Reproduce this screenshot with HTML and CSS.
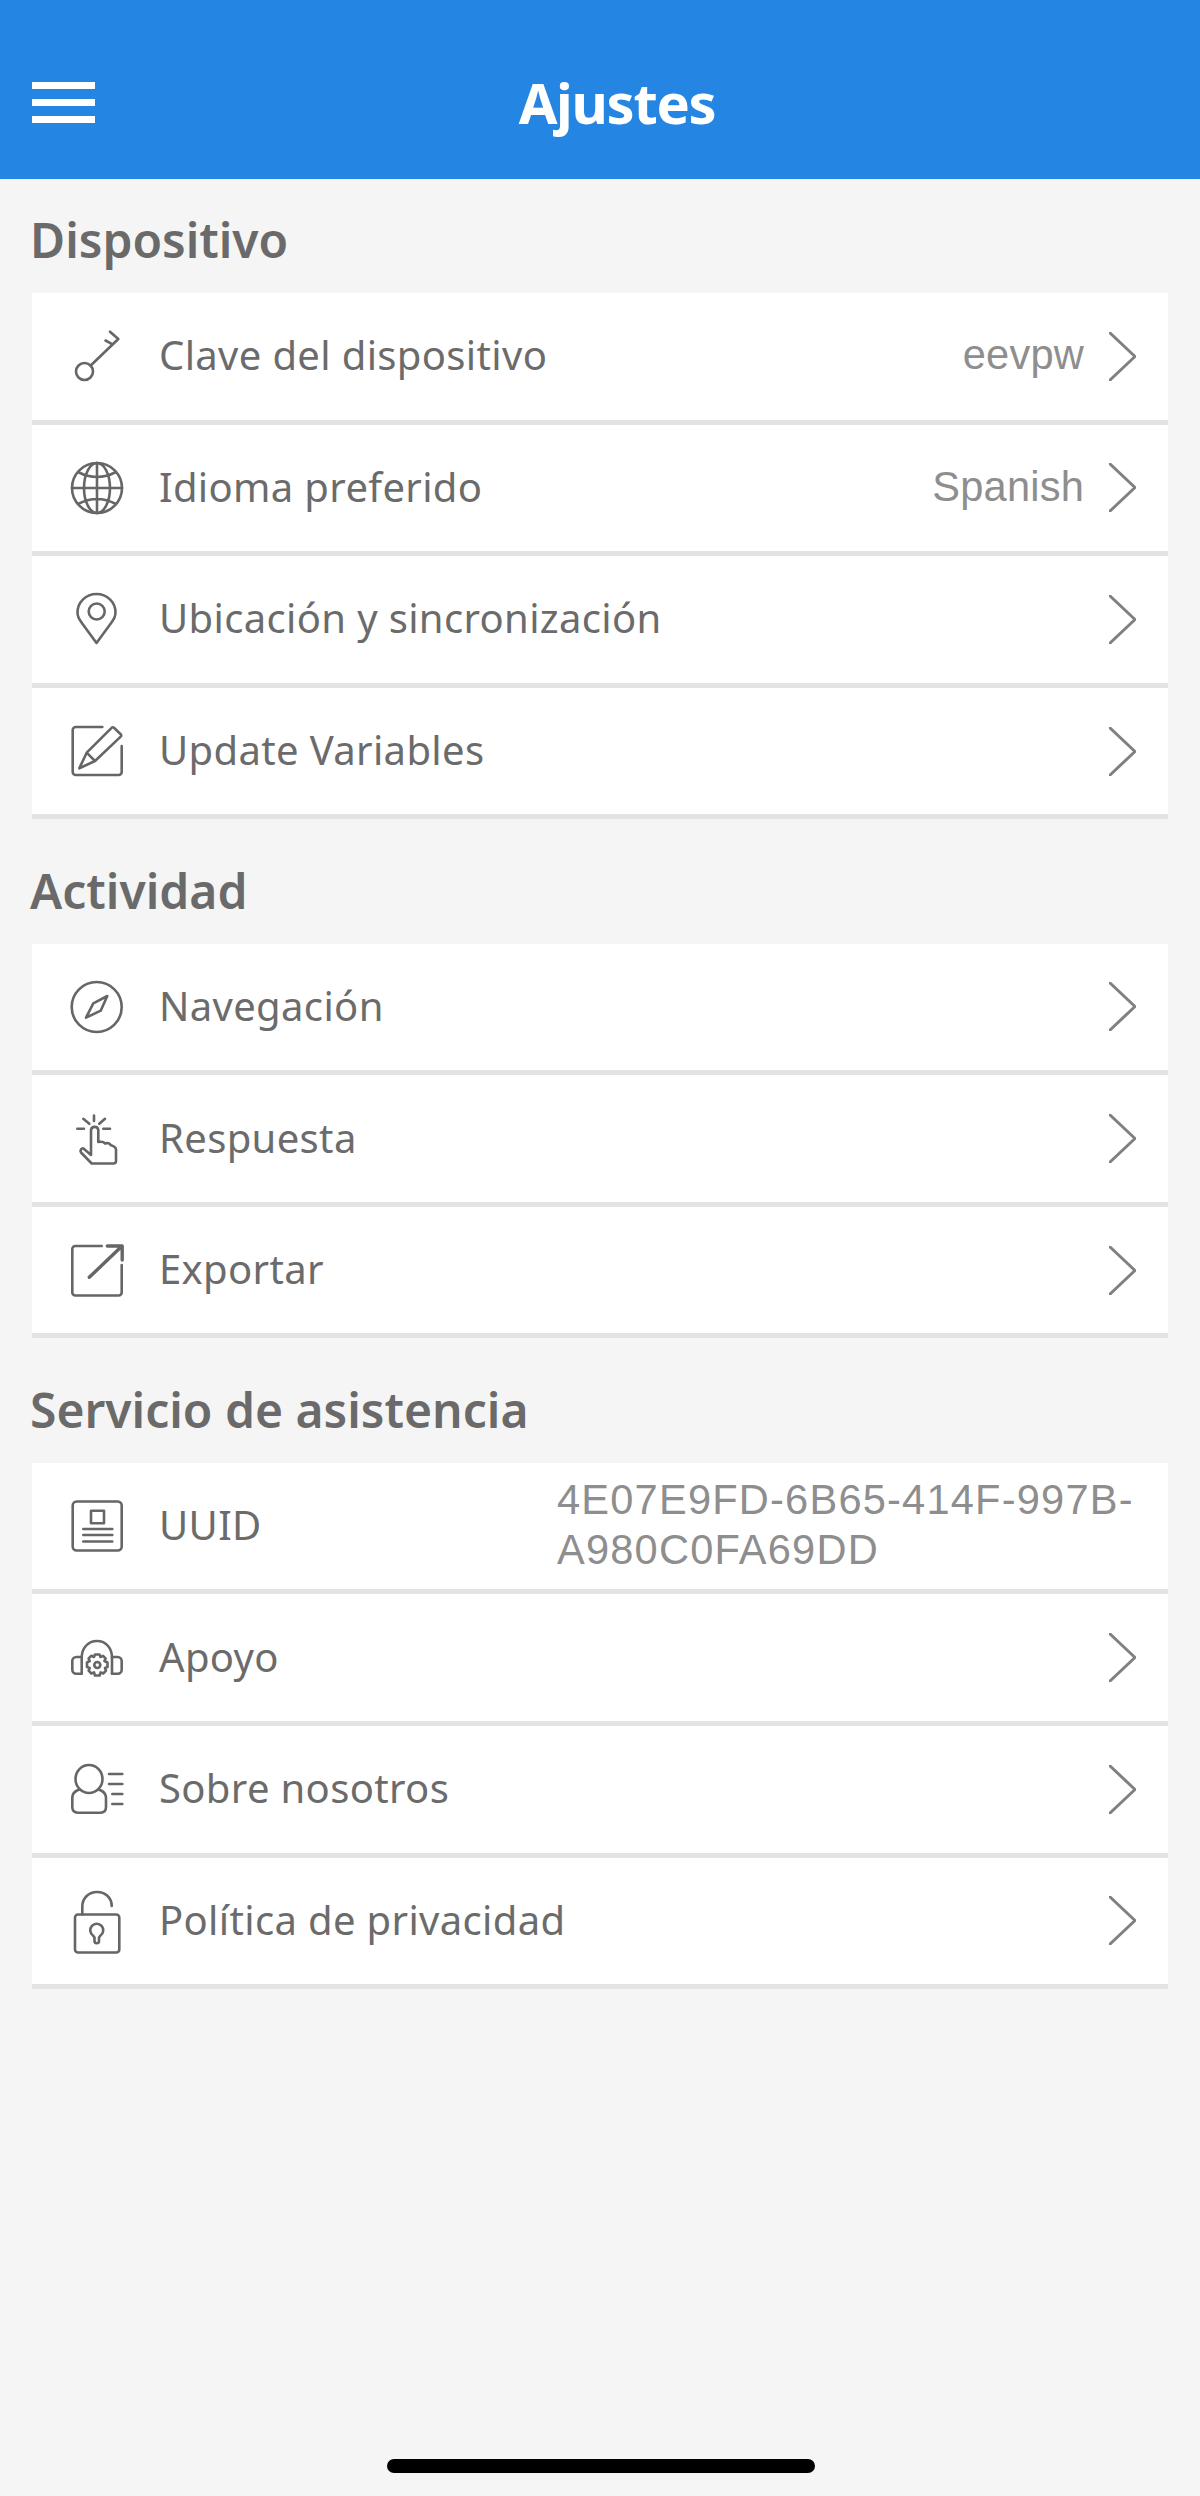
FILE: index.html
```html
<!DOCTYPE html>
<html lang="es">
<head>
<meta charset="utf-8">
<title>Ajustes</title>
<link rel="stylesheet" href="styles.css">
</head>
<body>
<header class="topbar">
  <button class="menu" aria-label="Menu"><span></span><span></span><span></span></button>
  <h1 class="title">Ajustes</h1>
</header>
<main class="content">
  <section class="group group-first">
    <h2 class="group-title">Dispositivo</h2>
    <ul class="list">
      <li class="row">
        <svg class="icon" viewBox="0 0 60 60"><circle cx="17.5" cy="45.5" r="8.5"/><path d="M23.7 39.5 51.3 13 43 5.7M44.7 17.8 38.5 14.5"/></svg>
        <span class="label">Clave del dispositivo</span>
        <span class="value">eevpw</span>
        <svg class="chev" viewBox="0 0 27 49"><path d="M1 1 26 24.5 1 48"/></svg>
      </li>
      <li class="row">
        <svg class="icon" viewBox="0 0 60 60"><circle cx="30" cy="30" r="25"/><ellipse cx="30" cy="30" rx="13" ry="25"/><path d="M30 5V55M5 30H55M11 14Q30 24 49 14M11 46Q30 36 49 46"/></svg>
        <span class="label">Idioma preferido</span>
        <span class="value">Spanish</span>
        <svg class="chev" viewBox="0 0 27 49"><path d="M1 1 26 24.5 1 48"/></svg>
      </li>
      <li class="row">
        <svg class="icon" viewBox="0 0 60 60"><path d="M29.5 54 14.5 33.5C11.5 29.5 10.5 27 10.5 23.5 10.5 13 19 5 29.5 5S48.5 13 48.5 23.5C48.5 27 47.5 29.5 44.5 33.5Z"/><circle cx="29.7" cy="22.5" r="8"/></svg>
        <span class="label">Ubicación y sincronización</span>
        <svg class="chev" viewBox="0 0 27 49"><path d="M1 1 26 24.5 1 48"/></svg>
      </li>
      <li class="row">
        <svg class="icon" viewBox="0 0 60 60"><path d="M35.3 6H8.700A3 3 0 0 0 5.700 9V51A3 3 0 0 0 8.700 54H51.700A3 3 0 0 0 54.700 51V25"/><path d="M12.300 47.300 19.700 31.700 44.600 6.800A1.600 1.600 0 0 1 47 6.800L53.700 13.200A1.600 1.600 0 0 1 53.700 15.600L28 40ZM19.700 31.700 28 40"/></svg>
        <span class="label">Update Variables</span>
        <svg class="chev" viewBox="0 0 27 49"><path d="M1 1 26 24.5 1 48"/></svg>
      </li>
    </ul>
  </section>
  <section class="group">
    <h2 class="group-title">Actividad</h2>
    <ul class="list">
      <li class="row">
        <svg class="icon" viewBox="0 0 60 60"><circle cx="29.7" cy="30" r="25"/><path d="M40.300 19 33.700 33.700 19 40.700 26.300 26.300Z"/></svg>
        <span class="label">Navegación</span>
        <svg class="chev" viewBox="0 0 27 49"><path d="M1 1 26 24.5 1 48"/></svg>
      </li>
      <li class="row">
        <svg class="icon" viewBox="0 0 60 60"><path d="M27 6.500V12M16.300 9.800 22.300 14.800M38 9.800 32.300 14.800M10.300 19.800H17M36.300 19.800H43"/><path d="M24 46 16.500 39.500C15 38.500 12.500 41.500 14 43.500L24.700 54.500H46.500C48 54.500 49 53.500 49 52V40.500C49 38 46.500 37 43.500 36 43 34.500 40.500 33.500 38 34.500 37 33 34 32.500 31.300 33V21A3.700 3.700 0 0 0 24 21Z"/></svg>
        <span class="label">Respuesta</span>
        <svg class="chev" viewBox="0 0 27 49"><path d="M1 1 26 24.5 1 48"/></svg>
      </li>
      <li class="row">
        <svg class="icon" viewBox="0 0 60 60"><path d="M34.700 6H8.300A3 3 0 0 0 5.300 9V52.500A3 3 0 0 0 8.300 55.500H51.700A3 3 0 0 0 54.700 52.500V25"/><path d="M22.300 37.300 54 7M40.300 6H55.200V20" class="thick"/></svg>
        <span class="label">Exportar</span>
        <svg class="chev" viewBox="0 0 27 49"><path d="M1 1 26 24.500 1 48"/></svg>
      </li>
    </ul>
  </section>
  <section class="group">
    <h2 class="group-title">Servicio de asistencia</h2>
    <ul class="list">
      <li class="row">
        <svg class="icon" viewBox="0 0 60 60"><rect x="5.700" y="5.500" width="49" height="49" rx="4"/><rect x="24" y="14.700" width="13" height="12.600"/><path d="M16.300 33H45.300M16.300 39H45.300M16.300 45.500H45.300"/></svg>
        <span class="label">UUID</span>
        <span class="value value-wrap">4E07E9FD-6B65-414F-997B-A980C0FA69DD</span>
      </li>
      <li class="row">
        <svg class="icon" viewBox="0 0 60 60"><path d="M14.700 45.500V30C14.700 20 21 13 30 13S45 20 45 30V45.500"/><path d="M14.700 29H9.300A4 4 0 0 0 5.300 33V41.700A4 4 0 0 0 9.300 45.700H14.700M45 29H50.700A4 4 0 0 1 54.700 33V41.700A4 4 0 0 1 50.700 45.700H45"/><path d="M28 26.500H32.500L33.500 29 36 27.800 38.600 30.400 37.400 33 40.500 34.500V39L38 40 39 42.700 36.200 45.500 33.600 44.400 32.600 47.500H28L27 44.400 24.400 45.500 21.600 42.700 22.700 40 20 39V34.500L22.700 33 21.600 30.400 24.400 27.800 27 29Z"/><circle cx="30.300" cy="37" r="3"/></svg>
        <span class="label">Apoyo</span>
        <svg class="chev" viewBox="0 0 27 49"><path d="M1 1 26 24.500 1 48"/></svg>
      </li>
      <li class="row">
        <svg class="icon" viewBox="0 0 60 60"><ellipse cx="22" cy="20" rx="13.500" ry="14"/><path d="M12.500 30.500 10 31.500C7 33 5.300 35.500 5.300 39V48C5.300 51.500 7.500 53.700 11 53.700H33.500C37 53.700 39 51.500 39 48V39C39 35.500 37 33 34 31.500L31.500 30.500"/><path d="M42 15H55.300M42 25H55.300M45.300 35H55.300M45.300 45H55.300"/></svg>
        <span class="label">Sobre nosotros</span>
        <svg class="chev" viewBox="0 0 27 49"><path d="M1 1 26 24.500 1 48"/></svg>
      </li>
      <li class="row">
        <svg class="icon" viewBox="0 0 60 60"><rect x="8" y="23.500" width="44.300" height="38" rx="3"/><path d="M15.300 23.500V15.500C15.300 7 22 1 30 1S44.700 6.500 44.700 15"/><path d="M27.500 46.500 26 44.500A6.500 6.500 0 1 1 33.500 44.500L32 46.500V50A2.200 2.200 0 0 1 27.500 50Z"/></svg>
        <span class="label">Política de privacidad</span>
        <svg class="chev" viewBox="0 0 27 49"><path d="M1 1 26 24.500 1 48"/></svg>
      </li>
    </ul>
  </section>
</main>
<div class="home-indicator"></div>
</body>
</html>
```

FILE: styles.css
```css
* {
  box-sizing: border-box;
}

html,
body {
  margin: 0;
  padding: 0;
}

body {
  width: 1200px;
  height: 2496px;
  background: #f5f5f5;
  font-family: "Noto Sans", "Open Sans", sans-serif;
  color: #666;
  position: relative;
  overflow: hidden;
}

.topbar {
  display: flex;
  align-items: center;
  height: 180px;
  padding: 25px 61px 0 32px;
  background: #2585e2;
  border-bottom: 1px solid #e8f1fb;
}

.menu {
  display: flex;
  flex-direction: column;
  gap: 10px;
  width: 63px;
  padding: 0;
  border: 0;
  background: none;
}

.menu span {
  display: block;
  height: 7px;
  background: #fff;
}

.title {
  flex: 1;
  margin: 0;
  font-size: 56px;
  font-weight: 700;
  line-height: 60px;
  letter-spacing: -1.3px;
  text-align: center;
  color: #fff;
}

.content {
  padding: 0 32px;
}

.group-title {
  display: flex;
  align-items: center;
  height: 124.3px;
  margin: 0 0 0 -2px;
  padding-top: 17px;
  font-size: 48px;
  font-weight: 600;
  color: #6a6a6a;
}

.group-first .group-title {
  height: 113px;
  padding-top: 12px;
  padding-bottom: 6px;
}

.list {
  margin: 0;
  padding: 0;
  list-style: none;
}

.row {
  display: flex;
  align-items: center;
  height: 131.6px;
  padding: 0 32px 0 35px;
  background: #fff;
  border-bottom: 5px solid #e3e3e3;
}

.icon {
  flex: none;
  width: 60px;
  height: 60px;
  margin-right: 32px;
  overflow: visible;
  fill: none;
  stroke: #666;
  stroke-width: 2.6;
  stroke-linecap: round;
  stroke-linejoin: round;
}

.icon .thick {
  stroke-width: 3.4;
}

.label {
  flex: 1;
  padding-bottom: 3px;
  font-size: 40px;
  letter-spacing: 0.35px;
  color: #6b6b6b;
}

.value {
  margin-left: 20px;
  padding-bottom: 2px;
  font-family: "Liberation Sans", Arial, sans-serif;
  font-size: 41.6px;
  line-height: 50px;
  letter-spacing: 0.2px;
  color: #8e8e8e;
}

.value-wrap {
  flex: none;
  width: 582px;
  margin-right: -3px;
  margin-left: 0;
  letter-spacing: 1.2px;
}

.chev {
  flex: none;
  width: 27px;
  height: 49px;
  margin-left: 25px;
  fill: none;
  stroke: #808080;
  stroke-width: 3;
  stroke-linecap: round;
  stroke-linejoin: round;
}

.home-indicator {
  position: absolute;
  left: 387px;
  top: 2459px;
  width: 428px;
  height: 14px;
  border-radius: 7px;
  background: #000;
}
```
